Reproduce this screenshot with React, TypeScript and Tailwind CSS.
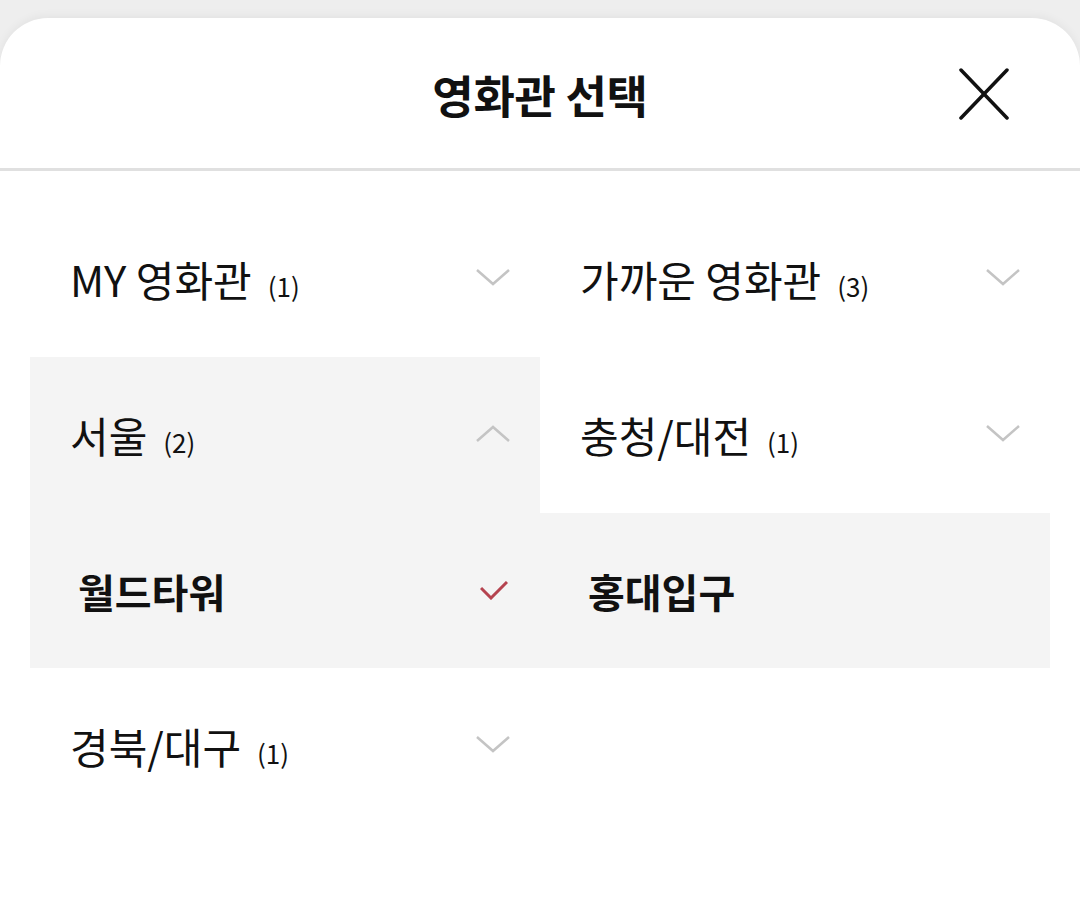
import React from "react";

const font = { fontFamily: '"Noto Sans CJK KR", "Noto Sans", sans-serif' };

function Chevron({ up = false }: { up?: boolean }) {
  return (
    <svg width="34" height="17" viewBox="0 0 34 17" className="shrink-0">
      <polyline
        points={up ? "1,16 17,2 33,16" : "1,1 17,15 33,1"}
        fill="none"
        stroke="#c4c4c4"
        strokeWidth="2.5"
      />
    </svg>
  );
}

function Region({
  label,
  count,
  open = false,
  empty = false,
}: {
  label?: string;
  count?: number;
  open?: boolean;
  empty?: boolean;
}) {
  if (empty) return <div className="h-[156px]" />;
  return (
    <div
      className={`h-[156px] flex items-center justify-between pl-[40px] pr-[30px] ${
        open ? "bg-[#f4f4f4]" : "bg-white"
      }`}
    >
      <div className="flex items-baseline text-[#111111]">
        <span className="text-[42px] leading-none">{label}</span>
        <span className="ml-[16px] text-[26px] leading-none">({count})</span>
      </div>
      <div className="-mt-[4px]">
        <Chevron up={open} />
      </div>
    </div>
  );
}

export default function App() {
  return (
    <div className="w-full h-[905px] overflow-hidden bg-[#eeeeee] pt-[18px]" style={font}>
      <div className="h-full bg-white rounded-t-[48px] shadow-[0_-2px_10px_rgba(0,0,0,0.05)]">
        <div className="relative h-[150px] flex items-center justify-center">
          <h1 className="text-[45px] font-bold text-[#111111] leading-none tracking-[-0.3px] mt-[2px]">
            영화관 선택
          </h1>
          <button className="absolute right-[70px] top-[50px] w-[52px] h-[52px] flex items-center justify-center">
            <svg width="50" height="52" viewBox="0 0 50 52">
              <line x1="2" y1="2" x2="48" y2="50" stroke="#111" strokeWidth="3.5" strokeLinecap="round" />
              <line x1="48" y1="2" x2="2" y2="50" stroke="#111" strokeWidth="3.5" strokeLinecap="round" />
            </svg>
          </button>
        </div>
        <div className="h-[3px] bg-[#e0e0e0]" />
        <div className="px-[30px] pt-[30px]">
          <div className="grid grid-cols-2">
            <Region label="MY 영화관" count={1} />
            <Region label="가까운 영화관" count={3} />
            <Region label="서울" count={2} open />
            <Region label="충청/대전" count={1} />
            <div className="col-span-2 grid grid-cols-2 h-[155px] bg-[#f4f4f4]">
              <div className="flex items-center justify-between pl-[48px] pr-[32px]">
                <span className="text-[40px] font-bold text-[#111111] leading-none">월드타워</span>
                <svg width="28" height="19" viewBox="0 0 28 19">
                  <polyline points="1,7 11,17 27,1" fill="none" stroke="#b5434f" strokeWidth="3" />
                </svg>
              </div>
              <div className="flex items-center pl-[48px]">
                <span className="text-[40px] font-bold text-[#111111] leading-none">홍대입구</span>
              </div>
            </div>
            <Region label="경북/대구" count={1} />
            <Region empty />
          </div>
        </div>
      </div>
    </div>
  );
}
